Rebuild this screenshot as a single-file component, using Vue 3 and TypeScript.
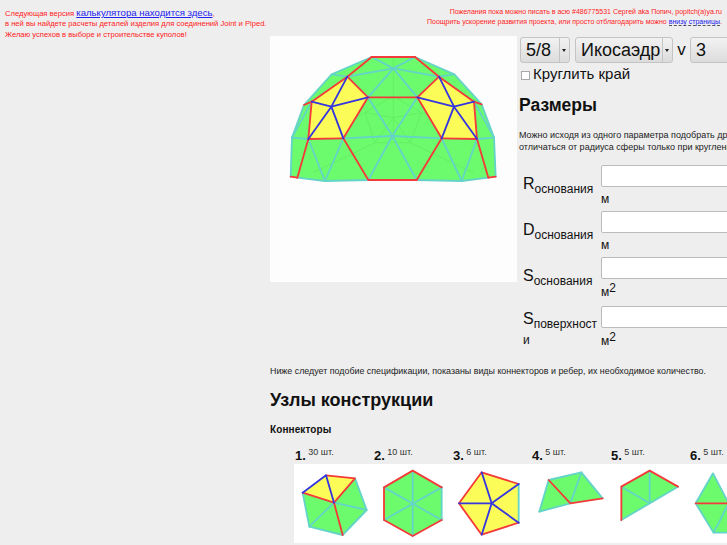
<template>
  <div class="page">
    <aside class="side">
      <p>Следующая версия <a class="big-link" href="#">калькулятора находится здесь</a>,</p>
      <p>в ней вы найдете расчеты деталей изделия для соединений Joint и Piped.</p>
      <p>Желаю успехов в выборе и строительстве куполов!</p>
    </aside>

    <main class="main">
      <header class="notice">
        <p>Пожелания пока можно писать в асю #486775531 Сергей aka Попич, popitch(a)ya.ru</p>
        <p>Поощрить ускорение развития проекта, или просто отблагодарить можно <a href="#">внизу страницы</a>.</p>
      </header>

      <section class="top">
        <svg class="dome" viewBox="0 0 741 738" width="247" height="246">
          <rect width="741" height="738" fill="#fdfdfd" />
          <polygon :points="domeOutline" fill="#6cfb6c" />
          <polyline
            v-for="(l, i) in domeBack"
            :key="'b' + i"
            :points="l"
            fill="none"
            stroke="#64f064"
            stroke-width="3"
          />
          <polygon v-for="(p, i) in domeYellow" :key="'y' + i" :points="p" fill="#fcfc58" />
          <polyline v-for="(l, i) in domeCyan" :key="'c' + i" :points="l" class="edge cyan" />
          <polyline v-for="(l, i) in domeRed" :key="'r' + i" :points="l" class="edge red" />
          <polyline v-for="(l, i) in domeBlue" :key="'u' + i" :points="l" class="edge blue" />
        </svg>

        <div class="panel">
          <div class="controls">
            <div class="select s1"><span class="val">5/8</span><span class="arrow"></span></div>
            <div class="select s2"><span class="val">Икосаэдр</span><span class="arrow"></span></div>
            <span class="v">v</span>
            <div class="select s3"><span class="val">3</span></div>
          </div>
          <label class="round"><span class="check"></span>Круглить край</label>

          <h2 class="sizes">Размеры</h2>
          <p class="hint">Можно исходя из одного параметра подобрать другие, они будут<br />отличаться от радиуса сферы только при круглении края</p>

          <div v-for="f in fields" :key="f.cls" class="field" :class="f.cls">
            <div class="name">{{ f.letter }}<sub>{{ f.sub }}</sub></div>
            <div class="value">
              <div class="input"></div>
              <div class="unit">м<sup v-if="f.square">2</sup></div>
            </div>
          </div>
        </div>
      </section>

      <p class="spec">Ниже следует подобие спецификации, показаны виды коннекторов и ребер, их необходимое количество.</p>
      <h2 class="nodes">Узлы конструкции</h2>
      <h4 class="conn">Коннекторы</h4>

      <div class="labels">
        <div v-for="(c, i) in connectors" :key="i" class="label">
          <b>{{ i + 1 }}.</b> <span>{{ c.count }} шт.</span>
        </div>
      </div>
      <div class="strip">
        <svg v-for="(c, i) in connectors" :key="i" viewBox="0 0 237 237" width="79" height="79" class="node">
          <polygon v-for="(p, j) in c.fill" :key="j" :points="p.pts" :fill="p.color" />
          <polyline v-for="(l, j) in c.cyan" :key="'c' + j" :points="l" class="edge cyan" />
          <polyline v-for="(l, j) in c.red" :key="'r' + j" :points="l" class="edge red" />
          <polyline v-for="(l, j) in c.blue" :key="'u' + j" :points="l" class="edge blue" />
        </svg>
      </div>
    </main>
  </div>
</template>

<script setup lang="ts">
const GREEN = '#6cfb6c'
const YELLOW = '#fcfc58'

// координаты сняты с картинки купола, viewBox 741x738
const domeOutline = '305,63 435,63 553,115 635,205 672,305 677,422 655,425 575,435 440,432 295,432 165,435 82,425 62,422 66,305 102,207 185,115'
const domeYellow = [
  '232,122 294,184 220,307 115,309 125,197',
  '507,122 442,184 515,307 621,309 612,197'
]
const domeBack = [
  '285,230 370,245 455,230',
  '285,230 370,180 455,230',
  '285,230 315,320 420,320 455,230',
  '315,320 370,245 420,320',
  '370,60 370,300',
  '130,410 315,320',
  '610,410 420,320',
  '130,300 285,230',
  '610,300 455,230'
]
const domeCyan = [
  '305,63 185,115 102,207 66,305 62,422',
  '435,63 553,115 635,205 672,305 677,422',
  '82,425 165,435 295,432',
  '440,432 575,435 655,425',
  '305,63 370,97 435,63',
  '185,115 232,122 370,97 507,122 553,115',
  '294,184 370,97 442,184',
  '294,184 367,300 442,184',
  '220,307 367,300 515,307',
  '295,432 367,300 440,432',
  '66,305 115,309 165,435 220,307',
  '672,305 621,309 575,435 515,307',
  '125,197 66,305',
  '612,197 672,305'
]
const domeRed = [
  '305,63 435,63',
  '232,122 305,63',
  '507,122 435,63',
  '102,207 125,197 232,122 294,184 442,184 507,122 612,197 635,205',
  '82,425 115,309 125,197',
  '655,425 621,309 612,197',
  '295,432 220,307 294,184',
  '440,432 515,307 442,184',
  '115,309 220,307',
  '515,307 621,309',
  '295,432 440,432',
  '62,422 82,425',
  '655,425 677,422'
]
const domeBlue = [
  '232,122 184,212 115,309',
  '184,212 220,307',
  '125,197 184,212 294,184',
  '507,122 552,212 621,309',
  '552,212 515,307',
  '612,197 552,212 442,184'
]

const fields = [
  { letter: 'R', sub: 'основания', square: false, cls: 'f1' },
  { letter: 'D', sub: 'основания', square: false, cls: 'f2' },
  { letter: 'S', sub: 'основания', square: true, cls: 'f3' },
  { letter: 'S', sub: 'поверхности', square: true, cls: 'f4' }
]

const connectors = [
  {
    count: 30,
    fill: [
      { pts: '120,116 96,34 183,43 218,138 146,213 46,188 26,86', color: GREEN },
      { pts: '120,116 26,86 96,34 183,43', color: YELLOW }
    ],
    cyan: ['183,43 218,138 146,213 46,188 26,86', '120,116 218,138', '120,116 46,188'],
    red: ['96,34 183,43 120,116', '26,86 120,116 146,213'],
    blue: ['26,86 96,34 120,116']
  },
  {
    count: 10,
    fill: [{ pts: '119,20 206,70 206,168 119,216 33,168 33,70', color: GREEN }],
    cyan: ['206,70 206,168', '119,20 119,216', '33,70 206,168', '33,168 206,70'],
    red: ['206,168 119,216 33,168 33,70 119,20 206,70'],
    blue: []
  },
  {
    count: 6,
    fill: [{ pts: '89,25 200,60 200,176 89,212 21,118', color: YELLOW }],
    cyan: ['200,60 200,176'],
    red: ['200,60 89,25 21,118 89,212 200,176'],
    blue: ['119,118 89,25', '119,118 200,60', '119,118 200,176', '119,118 89,212', '119,118 21,118']
  },
  {
    count: 5,
    fill: [{ pts: '53,48 151,25 215,103 118,118 25,143', color: GREEN }],
    cyan: ['25,143 53,48 151,25 215,103', '151,25 118,118 25,143'],
    red: ['53,48 118,118 215,103'],
    blue: []
  },
  {
    count: 5,
    fill: [{ pts: '34,68 119,20 204,68 34,168', color: GREEN }],
    cyan: ['204,68 34,168', '119,20 119,118 34,68'],
    red: ['34,168 34,68 119,20 204,68'],
    blue: []
  },
  {
    count: 5,
    fill: [{ pts: '72,28 20,118 74,206 170,206 119,118', color: GREEN }],
    cyan: ['119,118 72,28 20,118 74,206 170,206', '74,206 119,118'],
    red: ['20,118 119,118'],
    blue: []
  }
]
</script>

<style scoped>
.page {
  display: flex;
  width: 727px;
  height: 545px;
  overflow: hidden;
  background: #eeeeee;
  font-family: "Liberation Sans", Arial, sans-serif;
  color: #111;
}

.side {
  flex: 0 0 270px;
  min-width: 0;
  box-sizing: border-box;
  padding: 7px 0 0 5px;
  color: #f22;
  font-size: 7.6px;
}

.side p {
  margin: 0;
  height: 11px;
  line-height: 11px;
  white-space: nowrap;
}

.big-link {
  color: #22e;
  font-size: 9.6px;
}

.main {
  flex: 0 0 490px;
  min-width: 0;
  width: 490px;
}

.notice {
  width: 452px;
  height: 36px;
  box-sizing: border-box;
  padding: 7px 0 0 0;
  text-align: right;
  color: #f22;
  font-size: 7px;
}

.notice p {
  margin: 0 0 1px;
  line-height: 9px;
  white-space: nowrap;
}

.notice a {
  color: #22e;
  text-decoration: none;
  border-bottom: 1px dashed #555;
}

.top {
  display: flex;
  height: 326px;
}

.dome {
  flex: none;
  display: block;
}

.panel {
  margin-left: 2px;
  width: 300px;
}

.controls {
  display: flex;
  align-items: center;
  height: 27px;
  padding-left: 1px;
}

.select {
  display: flex;
  box-sizing: border-box;
  height: 26px;
  border: 1px solid #c4c4c4;
  border-radius: 3px;
  background: linear-gradient(#f2f2f2, #dcdcdc);
  font-size: 18px;
  line-height: 24px;
}

.val {
  flex: 1;
  padding-left: 5px;
}

.arrow {
  flex: 0 0 9px;
  border-left: 1px solid #c4c4c4;
  position: relative;
}

.arrow::after {
  content: "";
  position: absolute;
  left: 2px;
  top: 11px;
  border: 2.5px solid transparent;
  border-top: 3px solid #222;
}

.s1 { width: 50px; }
.s2 { width: 98px; margin-left: 5px; }
.s3 { width: 80px; flex: none; }
.v { width: 17px; text-align: center; font-size: 17px; }

.round {
  display: flex;
  align-items: center;
  height: 20px;
  padding-left: 2px;
  font-size: 15px;
}

.check {
  width: 7px;
  height: 7px;
  margin: 4px 3px 0 0;
  border: 1px solid #aaa;
  background: #fff;
}

.sizes {
  margin: 10px 0 0;
  height: 24px;
  font-size: 17.5px;
  line-height: 24px;
  white-space: nowrap;
}

.hint {
  margin: 12px 0 0;
  font-size: 9px;
  line-height: 12px;
  white-space: nowrap;
  color: #222;
}

.field {
  display: flex;
  margin-top: 10px;
  height: 36px;
}

.f1 { margin-top: 12px; }
.f4 { margin-top: 13px; }

.name {
  flex: 0 0 82px;
  padding: 11px 0 0 4px;
  font-size: 16px;
  line-height: 16px;
  box-sizing: border-box;
  word-break: break-all;
}

.name sub {
  font-size: 12px;
  vertical-align: -4px;
  line-height: 0;
}

.f4 .name {
  padding-top: 5px;
}

.value {
  width: 200px;
}

.input {
  box-sizing: border-box;
  width: 200px;
  height: 22px;
  border: 1px solid #bbb;
  border-radius: 2px;
  background: #fff;
}

.unit {
  font-size: 12px;
  line-height: 14px;
  margin-top: 5px;
}

.f3 .unit,
.f4 .unit {
  margin-top: 6px;
}

.unit sup {
  font-size: 12px;
  line-height: 0;
  vertical-align: 4px;
}

.spec {
  margin: 3px 0 0;
  height: 12px;
  font-size: 8.9px;
  line-height: 12px;
  white-space: nowrap;
  color: #222;
}

.nodes {
  margin: 11px 0 0;
  font-size: 18px;
  line-height: 24px;
  white-space: nowrap;
}

.conn {
  margin: 12px 0 0;
  font-size: 10px;
  line-height: 12px;
  letter-spacing: 0.1px;
}

.labels {
  display: flex;
  margin: 11px 0 0 25px;
  height: 17px;
}

.label {
  flex: 0 0 79px;
  font-size: 9px;
  line-height: 17px;
  color: #333;
  white-space: nowrap;
}

.label b {
  font-size: 13px;
  color: #111;
}

.label span {
  position: relative;
  top: -5px;
}

.strip {
  display: flex;
  width: 480px;
  margin-left: 24px;
  background: #fff;
}

.node {
  flex: none;
  display: block;
}

.edge {
  fill: none;
  stroke-linejoin: round;
  stroke-linecap: round;
  stroke-width: 5.5;
}

.red { stroke: #f43a3a; }
.blue { stroke: #3636e0; }
.cyan { stroke: #64d4c8; }
</style>

<style>
html, body {
  margin: 0;
  overflow: hidden;
}
</style>
